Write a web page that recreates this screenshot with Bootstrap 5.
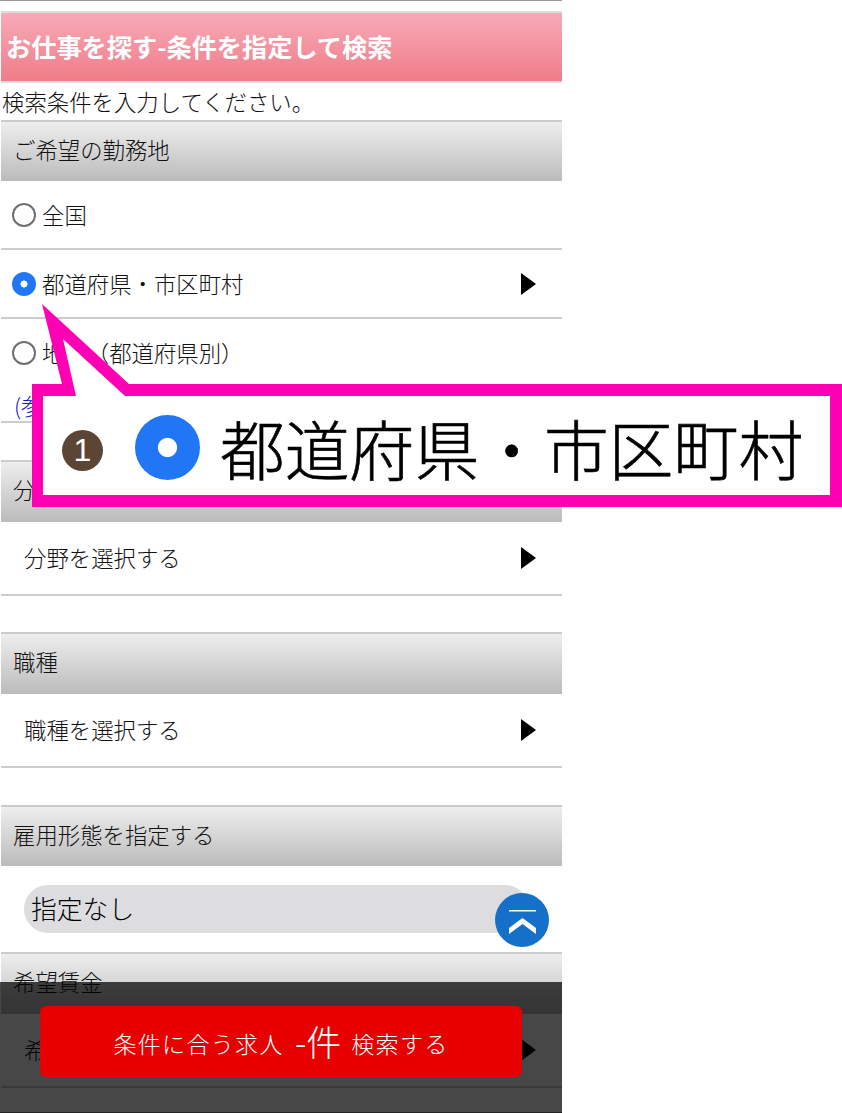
<!DOCTYPE html>
<html lang="ja">
<head>
  <meta charset="UTF-8">
  <meta name="viewport" content="width=device-width, initial-scale=1">
  <link href="https://cdn.jsdelivr.net/npm/bootstrap@5.3.2/dist/css/bootstrap.min.css" rel="stylesheet">
  <script src="https://cdn.jsdelivr.net/npm/bootstrap@5.3.2/dist/js/bootstrap.bundle.min.js"></script>
  <title>お仕事を探す</title>
  <style>
    html, body { height: 1113px; overflow: hidden; }
    body { font-family: "Noto Sans CJK JP", "Liberation Sans", sans-serif; font-size: 22.4px; font-weight: 300; color: #111; background: #fff; position: relative; }
    .job-page { width: 562px; border-top: 1px solid #999; padding-top: 10px; }
    .job-title { height: 72px; padding-left: 5px; margin: 0 0 0 1px; font-size: 25.2px; font-weight: 700; color: #fff; line-height: 66px;
      background: linear-gradient(#f7aab8, #f07c88); border-top: 2px solid #ddd; border-bottom: 2px solid #ddd; }
    .job-hint { height: 37px; padding-left: 2px; line-height: 36px; white-space: nowrap; }
    .job-head { height: 62px; margin-left: 1px; padding-left: 12px; line-height: 54px; background: linear-gradient(#eeeeee, #bbbbbb); border-top: 2px solid #ccc; }
    .job-head.short-head { height: 61px; }
    .job-row { height: 69px; margin-left: 1px; padding: 0 26px 0 11px; border-bottom: 2px solid #ccc; }
    .job-row.plain-row { padding-left: 23px; height: 74px; }
    .job-row.no-line { border-bottom: 0; height: 68px; }
    .job-gap { height: 36px; }
    .job-gap.wide-gap { height: 37px; }
    .job-link { height: 36px; margin-left: 1px; padding-left: 13px; line-height: 36px; color: #1414dc; border-bottom: 2px solid #ccc; }
    .job-radio.form-check-input { width: 24px; height: 24px; margin: 0 6px 0 0; border: 2px solid #6e6e73; flex-shrink: 0; }
    .job-radio.form-check-input:checked, .big-radio { background: radial-gradient(circle closest-side, #fff 0 28%, #2176f6 31%); border: 0; }
    .job-arrow { width: 0; height: 0; border-left: 15px solid #000; border-top: 11px solid transparent; border-bottom: 11px solid transparent; }
    .job-select-wrap { height: 86px; margin-left: 1px; padding: 19px 33px 0 23px; }
    .job-select { height: 48px; padding-left: 7px; border-radius: 24px; background: #dddde0; font-size: 25.8px; font-weight: 300; line-height: 46px; color: #000; }
    .job-bar { position: absolute; left: 0; top: 982px; width: 562px; height: 131px; background: rgba(0, 0, 0, .72); padding: 24px 40px 0 40px; border-bottom: 1px solid #222; }
    .job-search { width: 482px; height: 71px; padding-top: 4px; background: #e60000; border-radius: 6px; color: #fff; font-size: 23px; letter-spacing: 1.3px; font-weight: 300; }
    .job-search b { font-size: 35px; font-weight: 300; margin: 0 10px 4px 11px; letter-spacing: 0; }
    .job-top { position: absolute; left: 495px; top: 893px; width: 54px; height: 54px; border-radius: 50%; background: #1470c8; }
    .job-callout { position: absolute; left: 32px; top: 304px; width: 810px; height: 203px; }
    .job-callout svg { position: absolute; left: 0; top: 0; }
    .call-body { position: absolute; left: 30px; top: 111px; height: 65px; }
    .call-num { width: 41px; height: 41px; margin: 6px 32px 0 0; border-radius: 50%; background: #5b4636; color: #fff; font-family: "Liberation Sans", sans-serif; font-size: 32px; font-weight: 400; line-height: 41px; text-align: center; }
    .big-radio { width: 65px; height: 65px; border-radius: 50%; margin-right: 20px; }
    .call-text { font-size: 64.8px; line-height: 65px; font-weight: 300; -webkit-text-stroke: .6px #000; color: #000; white-space: nowrap; }
  </style>
</head>
<body>
<div class="job-page">
  <h1 class="job-title">お仕事を探す-条件を指定して検索</h1>
  <div class="job-hint">検索条件を入力してください。</div>

  <div class="job-head short-head">ご希望の勤務地</div>
  <label class="job-row d-flex align-items-center">
    <input class="form-check-input job-radio" type="radio" name="area"><span>全国</span>
  </label>
  <label class="job-row d-flex align-items-center">
    <input class="form-check-input job-radio" type="radio" name="area" checked><span class="flex-grow-1">都道府県・市区町村</span><span class="job-arrow"></span>
  </label>
  <label class="job-row no-line d-flex align-items-center">
    <input class="form-check-input job-radio" type="radio" name="area"><span>地域（都道府県別）</span>
  </label>
  <div class="job-link">(参考)</div>
  <div class="job-gap wide-gap"></div>

  <div class="job-head">分野</div>
  <div class="job-row plain-row d-flex align-items-center justify-content-between"><span>分野を選択する</span><span class="job-arrow"></span></div>
  <div class="job-gap"></div>

  <div class="job-head">職種</div>
  <div class="job-row plain-row d-flex align-items-center justify-content-between"><span>職種を選択する</span><span class="job-arrow"></span></div>
  <div class="job-gap wide-gap"></div>

  <div class="job-head short-head">雇用形態を指定する</div>
  <div class="job-select-wrap"><div class="job-select">指定なし</div></div>

  <div class="job-head">希望賃金</div>
  <div class="job-row plain-row d-flex align-items-center justify-content-between"><span>希望賃金を選択する</span><span class="job-arrow"></span></div>
</div>

<div class="job-top">
  <svg width="54" height="54" viewBox="0 0 54 54">
    <rect x="14" y="17" width="27" height="1.5" fill="#fff"/>
    <polygon points="27.5,25 41,35 41,41 27.5,31 14,41 14,35" fill="#fff"/>
  </svg>
</div>

<div class="job-bar">
  <div class="job-search d-flex align-items-center justify-content-center">条件に合う求人<b>-件</b>検索する</div>
</div>

<div class="job-callout">
  <svg width="810" height="203" viewBox="0 0 810 203">
    <polygon points="10,0 97,80 810,80 810,203 0,203 0,80 30,80" fill="#ff00b4"/>
    <polygon points="31,35 93,92 798,92 798,191 11,191 11,92 44,92" fill="#fff"/>
  </svg>
  <div class="call-body d-flex align-items-center">
    <div class="call-num">1</div>
    <div class="big-radio"></div>
    <div class="call-text">都道府県・市区町村</div>
  </div>
</div>
</body>
</html>
